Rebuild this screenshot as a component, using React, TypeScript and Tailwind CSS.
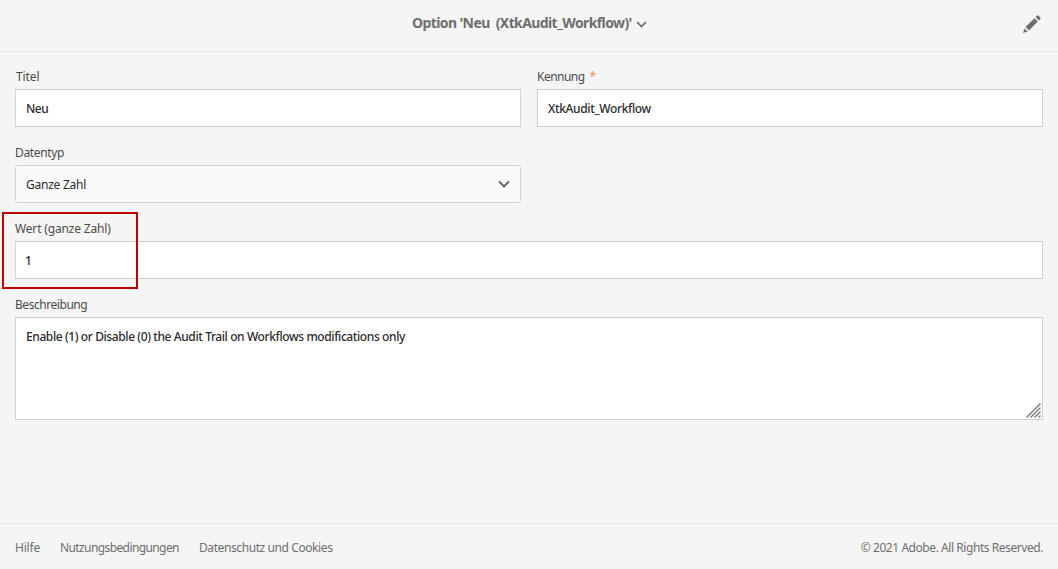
import type { ReactNode } from 'react';

function Label({ children, className }: { children: ReactNode; className: string }) {
  return <label className={`block h-[18px] pt-px text-[12px] leading-[18px] whitespace-pre text-[#4b4b4b] ${className}`}>{children}</label>;
}

const box = 'mt-1 flex h-[38px] items-center border border-[#d0d0d0] px-2.5 pt-0.5 text-[12px] text-[#2c2c2c]';

function Chevron({ className }: { className: string }) {
  return (
    <svg viewBox="0 0 12 8" fill="none" stroke="currentColor" className={className}>
      <path d="M1 1.3 6 6.3 11 1.3" strokeWidth="1.9" />
    </svg>
  );
}

export default function App() {
  return (
    <div className="relative flex h-[569px] w-[1058px] flex-col overflow-hidden bg-[#f5f5f5] font-['Noto_Sans',sans-serif]">
      <header className="flex h-[52px] shrink-0 items-start border-b border-[#e6e6e6] pt-3.5 pr-[17px]">
        <div className="flex h-[18px] flex-1 items-center pl-[412px] text-[#6e6e6e]">
          <h1 className="w-[224px] text-[14px] leading-[18px] font-bold tracking-[-0.6px] whitespace-pre">Option 'Neu  (XtkAudit_Workflow)'</h1>
          <Chevron className="mt-0.5 h-[7px] w-[11px]" />
        </div>
        <svg viewBox="0 0 18 18" className="mt-px h-[18px] w-[18px] fill-[#6e6e6e]">
          <path d="M0 18 1.4 13.4 4.6 16.6Z" />
          <path d="M2.5 12 11.4 3.2 14.8 6.6 6 15.4Z" />
          <path d="M12.5 2.1 14 0.7Q14.8 0 15.6 0.7L17.3 2.4Q18 3.2 17.3 4L15.9 5.5Z" />
        </svg>
      </header>

      <main className="flex flex-1 flex-col gap-4 px-[15px] pt-[15px]">
        <div className="grid grid-cols-2 gap-4">
          <div>
            <Label className="pl-px tracking-[-0.09px]">Titel</Label>
            <div className={`${box} bg-white font-medium tracking-[-0.5px]`}>Neu</div>
          </div>
          <div>
            <Label className="tracking-[-0.53px]">Kennung<span className="ml-[5px] text-[#ff8f66]">*</span></Label>
            <div className={`${box} bg-white font-medium tracking-[-0.36px]`}>XtkAudit_Workflow</div>
          </div>
        </div>

        <div className="w-[506px]">
          <Label className="tracking-[-0.36px]">Datentyp</Label>
          <div className={`${box} justify-between rounded-[3px] bg-[#fafafa] tracking-[-0.25px]`}>
            Ganze Zahl
            <Chevron className="mb-0.5 h-[8px] w-[12px] text-[#5a5a5a]" />
          </div>
        </div>

        <div>
          <Label className="tracking-[-0.17px]">Wert (ganze Zahl)</Label>
          <div className={`${box} bg-white font-medium`}><span className="-ml-px">1</span></div>
        </div>

        <div>
          <Label className="tracking-[-0.45px]">Beschreibung</Label>
          <div className="mt-1 flex h-[103px] justify-between border border-[#d0d0d0] bg-white pt-[10px] pl-2.5 text-[12px] leading-[18px] font-medium tracking-[-0.4px] text-[#2c2c2c]">
            Enable (1) or Disable (0) the Audit Trail on Workflows modifications only
            <svg viewBox="0 0 15 15" fill="none" stroke="#808080" className="mr-px mb-px h-[15px] w-[15px] self-end">
              <path d="M0.5 14.5 14.5 0.5M4.5 14.5 14.5 4.5M8.5 14.5 14.5 8.5M12.5 14.5 14.5 12.5" strokeWidth="1.5" />
            </svg>
          </div>
        </div>
      </main>

      <footer className="flex h-[46px] shrink-0 items-center border-t border-[#e6e6e6] px-[15px] pt-[3px] text-[12px] text-[#6e6e6e]">
        <span className="w-[45px] tracking-[-0.2px]">Hilfe</span>
        <span className="w-[139px] tracking-[-0.6px]">Nutzungsbedingungen</span>
        <span className="tracking-[-0.41px]">Datenschutz und Cookies</span>
        <span className="ml-auto tracking-[-0.44px]">© 2021 Adobe. All Rights Reserved.</span>
      </footer>

      <div className="absolute top-[212px] left-[2px] h-[77px] w-[136px] border-2 border-[#c00000]" />
    </div>
  );
}
